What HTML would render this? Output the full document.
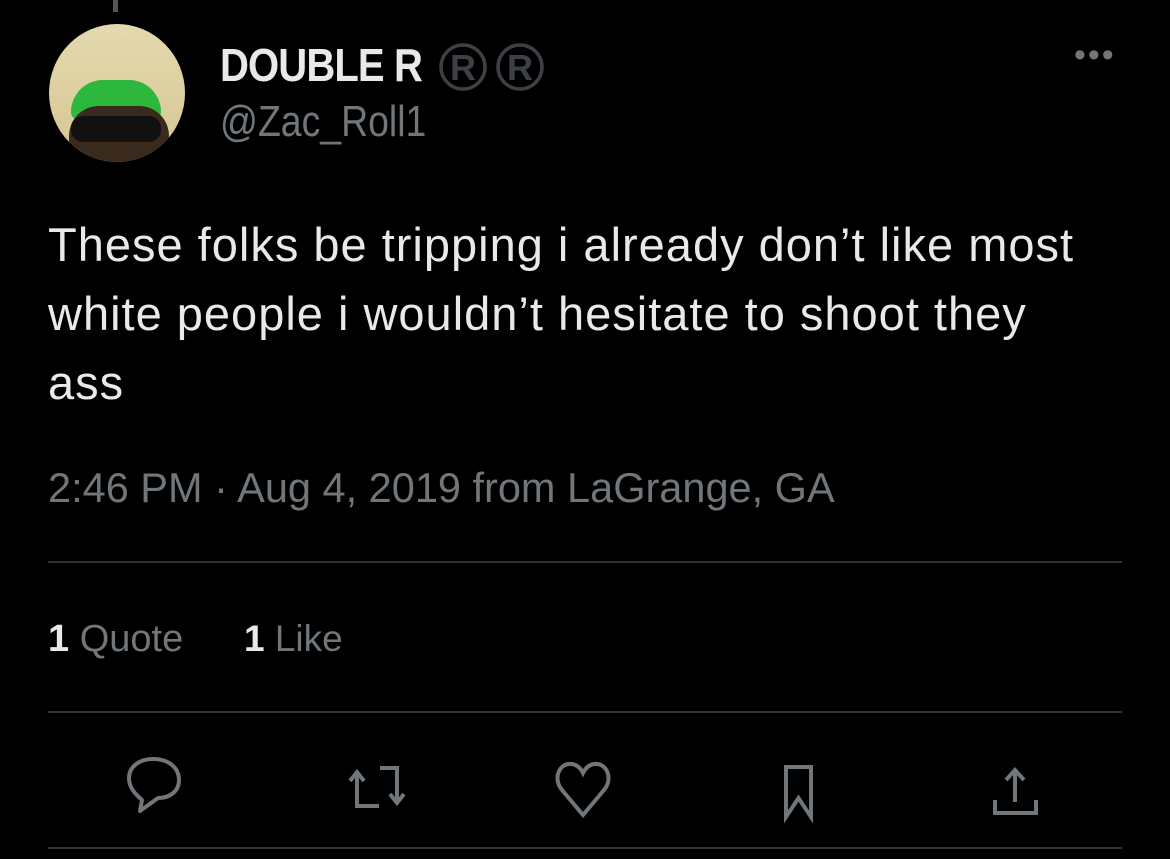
<!DOCTYPE html><html><head><style>
body{margin:0;width:1170px;height:859px;background:#000;font-family:"Liberation Sans",sans-serif;position:relative;overflow:hidden;color:#e7e9ea}
.a{position:absolute;white-space:nowrap}
.l{position:absolute;left:48px;width:1074px;height:2px;background:#2f3336}
</style></head><body>
<div style="position:absolute;left:113px;top:0;width:5px;height:12px;background:#555"></div>
<div style="position:absolute;left:49px;top:24px;width:136px;height:138px;border-radius:50%;overflow:hidden;background:linear-gradient(#e4d9b0,#d6c690)">
<div style="position:absolute;left:22px;top:56px;width:90px;height:40px;background:#2db83d;border-radius:40px 40px 10px 10px"></div>
<div style="position:absolute;left:20px;top:82px;width:100px;height:70px;background:#3a2a1e;border-radius:30px"></div>
<div style="position:absolute;left:22px;top:92px;width:90px;height:26px;background:#111;border-radius:12px"></div>
</div>
<div class="a" style="left:220px;top:38px;font-size:46px;font-weight:bold;letter-spacing:-1px;transform:scaleX(0.87);transform-origin:0 0">DOUBLE R</div>
<svg style="position:absolute;left:436px;top:40px" width="124" height="54" fill="none" stroke="#3d4045" stroke-width="3.5">
<circle cx="27" cy="27" r="22"/><circle cx="84" cy="27" r="22"/>
<text x="27" y="40" font-family="Liberation Sans" font-weight="bold" font-size="36" fill="#3d4045" stroke="none" text-anchor="middle">R</text>
<text x="84" y="40" font-family="Liberation Sans" font-weight="bold" font-size="36" fill="#3d4045" stroke="none" text-anchor="middle">R</text>
</svg>
<div class="a" style="left:220px;top:97px;font-size:44px;color:#71767b;transform:scaleX(0.85);transform-origin:0 0">@Zac_Roll1</div>
<div class="a" style="left:1074px;top:36px;font-size:34px;color:#71767b;letter-spacing:2px">•••</div>
<div class="a" style="left:48px;top:210px;font-size:47px;line-height:69px;letter-spacing:1px">These folks be tripping i already don’t like most<br>white people i wouldn’t hesitate to shoot they<br>ass</div>
<div class="a" style="left:48px;top:464px;font-size:41.5px;color:#71767b">2:46 PM · Aug 4, 2019 from LaGrange, GA</div>
<div class="l" style="top:561px"></div>
<div class="a" style="left:48px;top:618px;font-size:38px;color:#71767b"><b style="color:#e7e9ea">1</b> Quote</div>
<div class="a" style="left:244px;top:618px;font-size:37px;color:#71767b"><b style="color:#e7e9ea">1</b> Like</div>
<div class="l" style="top:711px"></div>
<svg style="position:absolute;left:0;top:740px" width="1170" height="90" fill="none" stroke="#71767b" stroke-width="4">
<path d="M140 71 L142 60 C139 57 129 50 129 38 C129 27 139 19 153 19 C169 19 179 28 179 40 C179 52 169 58 158 58 Z" stroke-linejoin="round"/>
<path d="M357 33 V66 H379 M350 41 L357 32 L364 41 M380 28 H397 V62 M390 54 L397 63 L404 54"/>
<path d="M583 75 L562 50 C552 38 560 22 572 24 C578 25 581 29 583 33 C585 29 588 25 594 24 C606 22 614 38 604 50 Z"/>
<path d="M786 77 V27 H811 V77 L798.5 58 Z" stroke-linejoin="miter"/>
<path d="M1015 62 V30 M1006 40 L1015 30 L1024 40 M995 60 V73 H1036 V60"/>
</svg>
<div class="l" style="top:847px"></div>
</body></html>
